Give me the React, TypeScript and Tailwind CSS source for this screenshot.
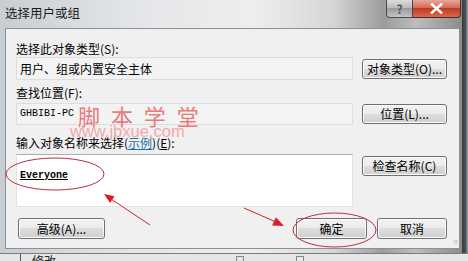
const btn =
  "flex items-center justify-center whitespace-nowrap rounded-[3px] border border-[#707070] bg-[linear-gradient(#f2f2f2_0%,#ebebeb_50%,#dddddd_50%,#cfcfcf_100%)] shadow-[inset_0_0_0_1px_#fbfbfb] text-[12px] leading-none text-black";

function Field({ children, h }: { children: React.ReactNode; h: string }) {
  return (
    <div className={`flex w-[337px] items-center border border-[#dadde2] bg-[#f3f3f3] px-[3px] ${h}`}>
      {children}
    </div>
  );
}

export default function App() {
  return (
    <div className="relative h-[261px] w-[468px] overflow-hidden bg-[#d4d4d4] font-['Noto_Sans_CJK_SC',sans-serif] text-black">
      <div className="flex h-[253px]">
        {/* window */}
        <div className="flex w-[462px] flex-col bg-[linear-gradient(90deg,#c9ced4_0%,#e4e6e9_30%,#eeeeee_55%,#d6d6d6_72%,#9c9c9c_83%,#bdbdbd_90%,#8c8c8c_100%)]">
          <div className="flex h-[28px] items-start">
            <div className="ml-[5px] mt-[5px] text-[12.5px] leading-[16px] text-[#1a1a1a]">选择用户或组</div>
            <div className="ml-auto mr-[1px] flex">
              <div className="flex h-[18px] w-[27px] items-center justify-center rounded-bl-[4px] border border-t-0 border-[#4a4a4a] bg-[linear-gradient(#dcdcdc_0%,#b8b8b8_50%,#9a9a9a_50%,#c4c4c4_100%)] text-[12px] font-bold leading-none text-[#555]">
                ?
              </div>
              <div className="flex h-[18px] w-[48px] items-center justify-center rounded-br-[4px] border border-l-0 border-t-0 border-[#4a2a2a] bg-[linear-gradient(#e9a99a_0%,#d0644f_50%,#c03a23_50%,#d76a4e_100%)]">
                <svg width="13" height="11" viewBox="0 0 13 11">
                  <path d="M2 1.5 L11 9.5 M11 1.5 L2 9.5" stroke="#fff" strokeWidth="2.6" strokeLinecap="square" />
                </svg>
              </div>
            </div>
          </div>

          {/* client area */}
          <div className="mb-[4px] ml-[5px] mr-[2px] flex flex-1 flex-col border border-[#8b9097] bg-[#f0f0f0] pl-[10px] pr-[12px] pt-[12px]">
            <div className="text-[12px] leading-[16px]">选择此对象类型(S):</div>
            <div className="flex gap-[9px]">
              <Field h="h-[23px]">
                <span className="text-[12px] leading-none">用户、组或内置安全主体</span>
              </Field>
              <div className={`${btn} mt-[2px] h-[20px] w-[85px]`}>对象类型(O)...</div>
            </div>

            <div className="mt-[5px] text-[12px] leading-[16px]">查找位置(F):</div>
            <div className="mt-[2px] flex gap-[9px]">
              <Field h="h-[22px]">
                <span className="font-['Liberation_Mono',monospace] text-[10px] leading-none">GHBIBI-PC</span>
              </Field>
              <div className={`${btn} mt-[1px] h-[20px] w-[85px]`}>位置(L)...</div>
            </div>

            <div className="mt-[10px] text-[12px] leading-[16px]">
              输入对象名称来选择(<span className="text-[#1a6fa8] underline">示例</span>)(<span className="underline">E</span>):
            </div>
            <div className="mt-[3px] flex gap-[9px]">
              <div className="h-[53px] w-[337px] border border-[#e2e3ea] border-t-[#abadb3] bg-white px-[3px] pt-[4px]">
                <span className="font-['Liberation_Mono',monospace] text-[10px] font-bold leading-none underline">Everyone</span>
              </div>
              <div className={`${btn} mt-[2px] h-[20px] w-[85px]`}>检查名称(C)</div>
            </div>

            <div className="mt-[11px] flex items-start">
              <div className={`${btn} ml-[2px] h-[21px] w-[87px]`}>高级(A)...</div>
              <div className={`${btn} ml-auto h-[21px] w-[71px]`}>确定</div>
              <div className={`${btn} ml-[10px] h-[21px] w-[70px]`}>取消</div>
            </div>
            <div className="mr-[-10px] mt-auto flex justify-end pb-[2px] text-[7px] leading-none tracking-[-1px] text-[#b8b8b8]">
              ⠿
            </div>
          </div>
        </div>
        <div className="w-[6px] bg-[linear-gradient(90deg,#3a3a3a_0%,#505050_60%,#8fb0cc_100%)]" />
      </div>

      {/* desktop behind */}
      <div className="flex h-[8px] items-start border-t border-[#7c7c7c] bg-[#e6e6e6]">
        <div className="ml-[20px] h-full w-px bg-[#555]" />
        <div className="ml-[11px] mt-[1px] text-[12px] leading-[12px] text-[#222]">修改</div>
        <div className="ml-[180px] mt-[2px] h-[6px] w-[8px] border border-[#888]" />
        <div className="ml-[52px] mt-[2px] h-[6px] w-[8px] border border-[#888]" />
      </div>

      {/* watermark */}
      <div className="pointer-events-none absolute left-[78px] top-[104px] text-[22px] leading-none tracking-[3px] text-[#e87a7a]">
        脚 本 学 堂
      </div>
      <div className="pointer-events-none absolute left-[70px] top-[123px] font-['Liberation_Sans',sans-serif] text-[16.5px] leading-none text-[#f0a0a0]/90">
        www.jbxue.com
      </div>

      {/* annotations */}
      <svg className="pointer-events-none absolute left-0 top-0" width="468" height="261" viewBox="0 0 468 261">
        <ellipse cx="55" cy="174" rx="49" ry="16" fill="none" stroke="#b3303c" strokeWidth="1" />
        <ellipse cx="334.5" cy="230" rx="41.5" ry="17" fill="none" stroke="#b3303c" strokeWidth="1" />
        <line x1="150" y1="225" x2="111" y2="199" stroke="#c82828" strokeWidth="1" />
        <polygon points="104,194 114.5,196.3 110.1,202.9" fill="#e01c1c" />
        <line x1="244" y1="208" x2="276" y2="222" stroke="#c82828" strokeWidth="1" />
        <polygon points="284,226 272.1,225.5 275.9,217.3" fill="#e01c1c" />
      </svg>
    </div>
  );
}
